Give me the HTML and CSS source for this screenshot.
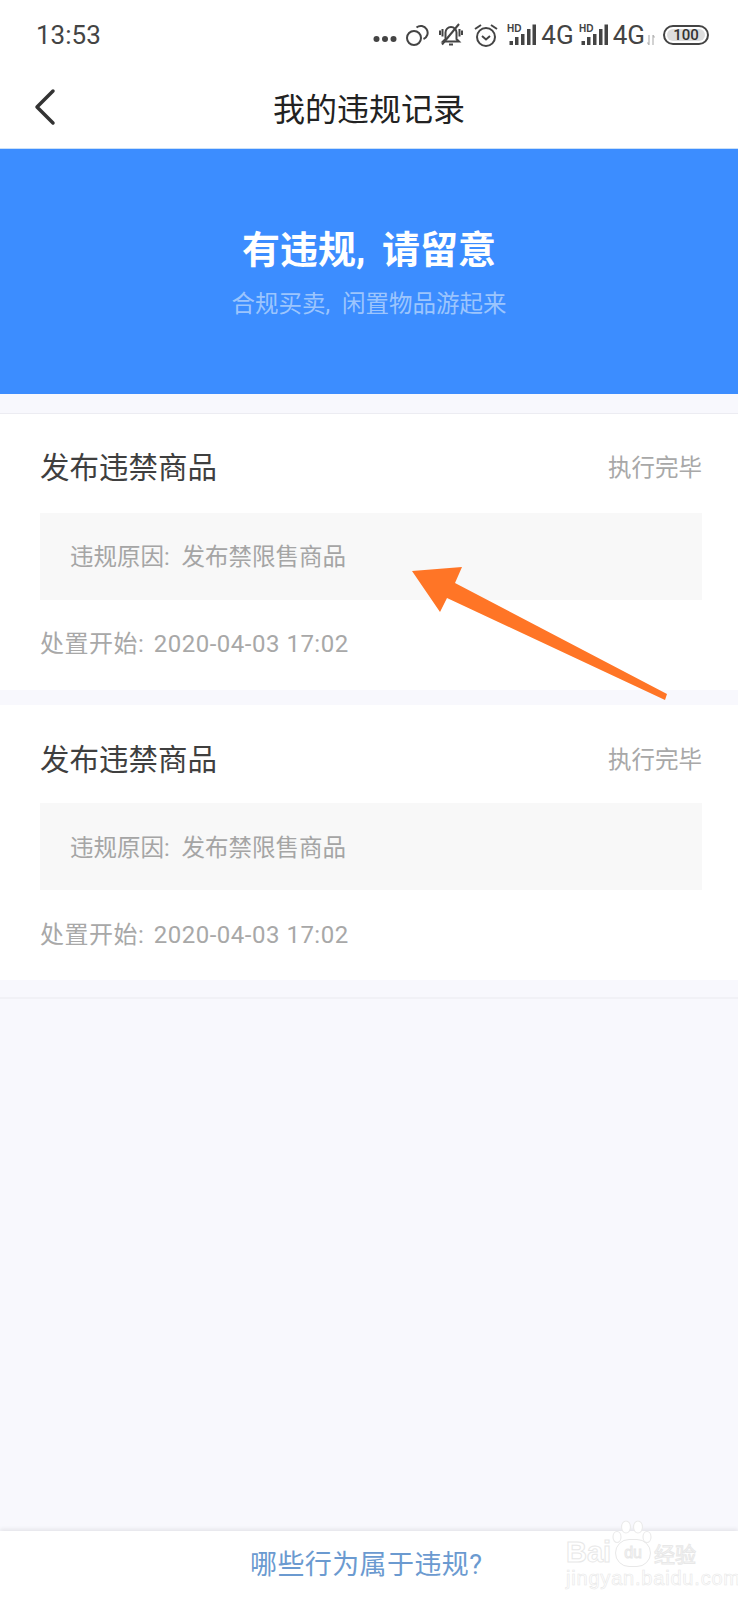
FILE: index.html
```html
<!DOCTYPE html>
<html lang="zh-CN">
<head>
    <meta charset="UTF-8">
    <meta name="viewport" content="width=device-width, initial-scale=1.0">
    <title>我的违规记录</title>
    <link rel="stylesheet" href="styles.css">
</head>
<body>
    <div class="page">
        <div class="status-bar">
            <span class="time">13:53</span>
            <div class="status-icons">
                <svg class="ic-dots" width="24" height="8" viewBox="0 0 24 8"><circle cx="3.500" cy="4" r="3" /><circle cx="12" cy="4" r="3" /><circle cx="20.500" cy="4" r="3" /></svg>
                <svg class="ic-link" width="24" height="22" viewBox="0 0 24 22"><circle cx="9" cy="14" r="7" /><path d="M11.500 3.500a6.800 6.800 0 1 1 7 11.500" /></svg>
                <svg class="ic-bell" width="24" height="23" viewBox="0 0 24 23"><path d="M6.500 16V9.500a5.500 5.500 0 0 1 11 0V16l2.500 2.500H4z" /><path d="M10 21.500h4" /><path d="M1 7.500v4.500M3.500 6v7.500M23 7.500v4.500M20.500 6v7.500" /><path d="M3 21.500L20 1" /></svg>
                <svg class="ic-alarm" width="24" height="24" viewBox="0 0 24 24"><circle cx="12" cy="14" r="9" /><path d="M8 13l4 3.500l4-3.500" /><path d="M1 6l6-4M23 6l-6-4" /></svg>
                <svg class="ic-signal" width="29" height="21" viewBox="0 0 29 21"><text x="0" y="8">HD</text><rect x="2.500" y="17" width="3.500" height="4" /><rect x="8" y="13" width="3.500" height="8" /><rect x="14" y="10" width="3.500" height="11" /><rect x="20" y="5" width="3.500" height="16" /><rect x="25.500" y="0.500" width="3.500" height="20.500" /></svg>
                <span class="net">4G</span>
                <svg class="ic-signal" width="29" height="21" viewBox="0 0 29 21"><text x="0" y="8">HD</text><rect x="2.500" y="17" width="3.500" height="4" /><rect x="8" y="13" width="3.500" height="8" /><rect x="14" y="10" width="3.500" height="11" /><rect x="20" y="5" width="3.500" height="16" /><rect x="25.500" y="0.500" width="3.500" height="20.500" /></svg>
                <span class="net">4G</span>
                <svg class="ic-arrows" width="8" height="10" viewBox="0 0 8 10"><path d="M2 0v10M0.500 7.500L2 10M6 10V0M7.500 2.500L6 0" /></svg>
                <div class="battery"><span>100</span></div>
            </div>
        </div>

        <div class="nav-bar">
            <svg class="back" width="24" height="40" viewBox="0 0 24 40"><path d="M19 4L3 20l16 16" /></svg>
            <h1>我的违规记录</h1>
        </div>

        <div class="banner">
            <h2>有违规, 请留意</h2>
            <p>合规买卖, 闲置物品游起来</p>
        </div>

        <div class="list">
            <div class="card">
                <div class="card-head">
                    <span class="card-title">发布违禁商品</span>
                    <span class="card-state">执行完毕</span>
                </div>
                <div class="reason">违规原因: 发布禁限售商品</div>
                <div class="date"><span class="date-label">处置开始:</span> 2020-04-03 17:02</div>
            </div>
            <div class="card">
                <div class="card-head">
                    <span class="card-title">发布违禁商品</span>
                    <span class="card-state">执行完毕</span>
                </div>
                <div class="reason">违规原因: 发布禁限售商品</div>
                <div class="date"><span class="date-label">处置开始:</span> 2020-04-03 17:02</div>
            </div>
        </div>

        <div class="footer">哪些行为属于违规?</div>

        <!-- annotation drawn over the screenshot -->
        <svg class="arrow" width="738" height="720" viewBox="0 0 738 720"><path d="M412 571L462 567L455 583L667 694L665 700L447 598L440 612Z" /></svg>

        <div class="watermark">
            <svg class="paw" width="40" height="26" viewBox="0 0 40 26"><ellipse cx="5" cy="17" rx="4" ry="5.500" /><ellipse cx="14" cy="7" rx="4.500" ry="6" /><ellipse cx="26" cy="7" rx="4.500" ry="6" /><ellipse cx="35" cy="17" rx="4" ry="5.500" /></svg>
            <div class="wm-logo"><span class="wm-en">Bai</span><span class="wm-du">du</span><span class="wm-cn">经验</span></div>
            <div class="wm-url">jingyan.baidu.com</div>
        </div>
    </div>
</body>
</html>
```

FILE: styles.css
```css
* {
    box-sizing: border-box;
}
body {
    margin: 0;
    background-color: #f8f8fd;
    font-family: Roboto, "Noto Sans CJK SC", sans-serif;
}
h1, h2, p {
    margin: 0;
    font-weight: normal;
}
.page {
    position: relative;
    width: 738px;
    height: 1600px;
    overflow: hidden;
    display: flex;
    flex-direction: column;
}

/* status bar */
.status-bar {
    height: 65px;
    padding: 4px 29px 0 36px;
    background-color: #fff;
    display: flex;
    align-items: center;
    justify-content: space-between;
}
.time {
    font-size: 26px;
    color: #444;
}
.status-icons {
    display: flex;
    align-items: center;
    color: #444;
}
.status-icons svg {
    flex: none;
}
.ic-dots {
    fill: #444;
    margin-top: 9px;
}
.ic-link, .ic-bell, .ic-alarm {
    fill: none;
    stroke: #444;
    stroke-width: 2;
}
.ic-link {
    margin-left: 8px;
}
.ic-bell {
    margin-left: 10px;
}
.ic-alarm {
    margin-left: 11px;
}
.ic-signal {
    margin-left: 9px;
    fill: #444;
}
.ic-signal text {
    font-family: "Liberation Sans", sans-serif;
    font-size: 10px;
    font-weight: bold;
}
.net {
    font-size: 26px;
    line-height: 24px;
    margin-left: 5px;
    margin-right: -4px;
}
.ic-arrows {
    margin-left: 6px;
    margin-top: 10px;
    fill: none;
    stroke: #b5b5b5;
    stroke-width: 1.2;
}
.battery {
    width: 46px;
    height: 20px;
    margin-left: 8px;
    border: 2px solid #444;
    border-radius: 10px;
    padding: 2px;
}
.battery span {
    display: block;
    height: 12px;
    border-radius: 6px;
    background-color: #ddd;
    font-size: 15px;
    font-weight: 500;
    line-height: 12px;
    text-align: center;
    color: #333;
}

/* nav */
.nav-bar {
    position: relative;
    height: 84px;
    background-color: #fff;
    border-bottom: 1px solid #c9e0f8;
    display: flex;
    align-items: center;
    justify-content: center;
}
.nav-bar h1 {
    font-size: 32px;
    color: #222;
}
.back {
    position: absolute;
    left: 34px;
    top: 22px;
    fill: none;
    stroke: #333;
    stroke-width: 3.500;
    stroke-linecap: round;
    stroke-linejoin: round;
}

/* banner */
.banner {
    height: 245px;
    background-color: #3c8dff;
    text-align: center;
    padding-top: 70px;
}
.banner h2 {
    font-size: 38px;
    line-height: 62px;
    font-weight: bold;
    word-spacing: 7px;
    color: #fff;
}
.banner p {
    font-size: 23.500px;
    line-height: 46px;
    word-spacing: 6px;
    color: #9cc5fd;
}

/* records */
.list {
    margin-top: 19px;
    padding-bottom: 17px;
    border-top: 1px solid #ececf2;
    border-bottom: 2px solid #f1f1f6;
}
.card {
    background-color: #fff;
    padding: 33px 36px 26px 40px;
}
.card + .card {
    margin-top: 15px;
    padding-top: 34px;
    padding-bottom: 25px;
}
.card-head {
    height: 40px;
    display: flex;
    align-items: center;
    justify-content: space-between;
    margin-bottom: 26px;
}
.card + .card .card-head {
    margin-bottom: 24px;
}
.card-title {
    font-size: 29.500px;
    padding-bottom: 4px;
    color: #3f3f3f;
}
.card-state {
    font-size: 23.500px;
    padding-bottom: 2px;
    color: #a8a8a8;
}
.reason {
    height: 87px;
    line-height: 88px;
    padding-left: 30px;
    background-color: #f8f8f8;
    font-size: 23.500px;
    word-spacing: 6px;
    color: #a5a5a5;
}
.card + .card .reason {
    line-height: 90px;
}
.date {
    margin-top: 24px;
    line-height: 40px;
    font-size: 24px;
    letter-spacing: 0.500px;
    color: #a8a8a8;
}
.date-label {
    margin-right: 3px;
}
.card + .card .date {
    margin-top: 25px;
}

/* bottom link */
.footer {
    position: absolute;
    left: 0;
    right: 0;
    bottom: 0;
    height: 69px;
    background-color: #fff;
    box-shadow: 0 -2px 4px rgba(0, 0, 0, 0.08);
    padding: 0 0 0 250px;
    font-size: 27px;
    line-height: 68px;
    letter-spacing: 0.400px;
    color: #6b9ad0;
}

/* overlays */
.arrow {
    position: absolute;
    left: 0;
    top: 0;
    fill: #ff7526;
}
.watermark {
    position: absolute;
    left: 560px;
    top: 1520px;
    width: 146px;
    height: 70px;
}
.paw {
    position: absolute;
    left: 52px;
    top: 0;
    fill: #fff;
    stroke: #ebebeb;
    stroke-width: 1.200;
}
.wm-logo {
    position: absolute;
    left: 6px;
    top: 16px;
    white-space: nowrap;
    display: flex;
    align-items: center;
    color: #fff;
    font-family: "Liberation Sans", sans-serif;
    -webkit-text-stroke: 1px #e8e8e8;
}
.wm-en {
    flex: none;
    font-size: 29px;
    font-weight: bold;
}
.wm-du {
    flex: none;
    margin-left: 4px;
    padding: 0 8px;
    border: 1px solid #e8e8e8;
    border-radius: 14px;
    font-size: 16px;
    line-height: 26px;
}
.wm-cn {
    flex: none;
    margin-left: 3px;
    font-family: "Noto Sans CJK SC", sans-serif;
    font-size: 21px;
    line-height: 30px;
}
.wm-url {
    position: absolute;
    left: 6px;
    top: 47px;
    white-space: nowrap;
    font-family: "Liberation Sans", sans-serif;
    font-size: 20px;
    letter-spacing: 0.800px;
    color: #fff;
    -webkit-text-stroke: 0.600px #e8e8e8;
}
```
